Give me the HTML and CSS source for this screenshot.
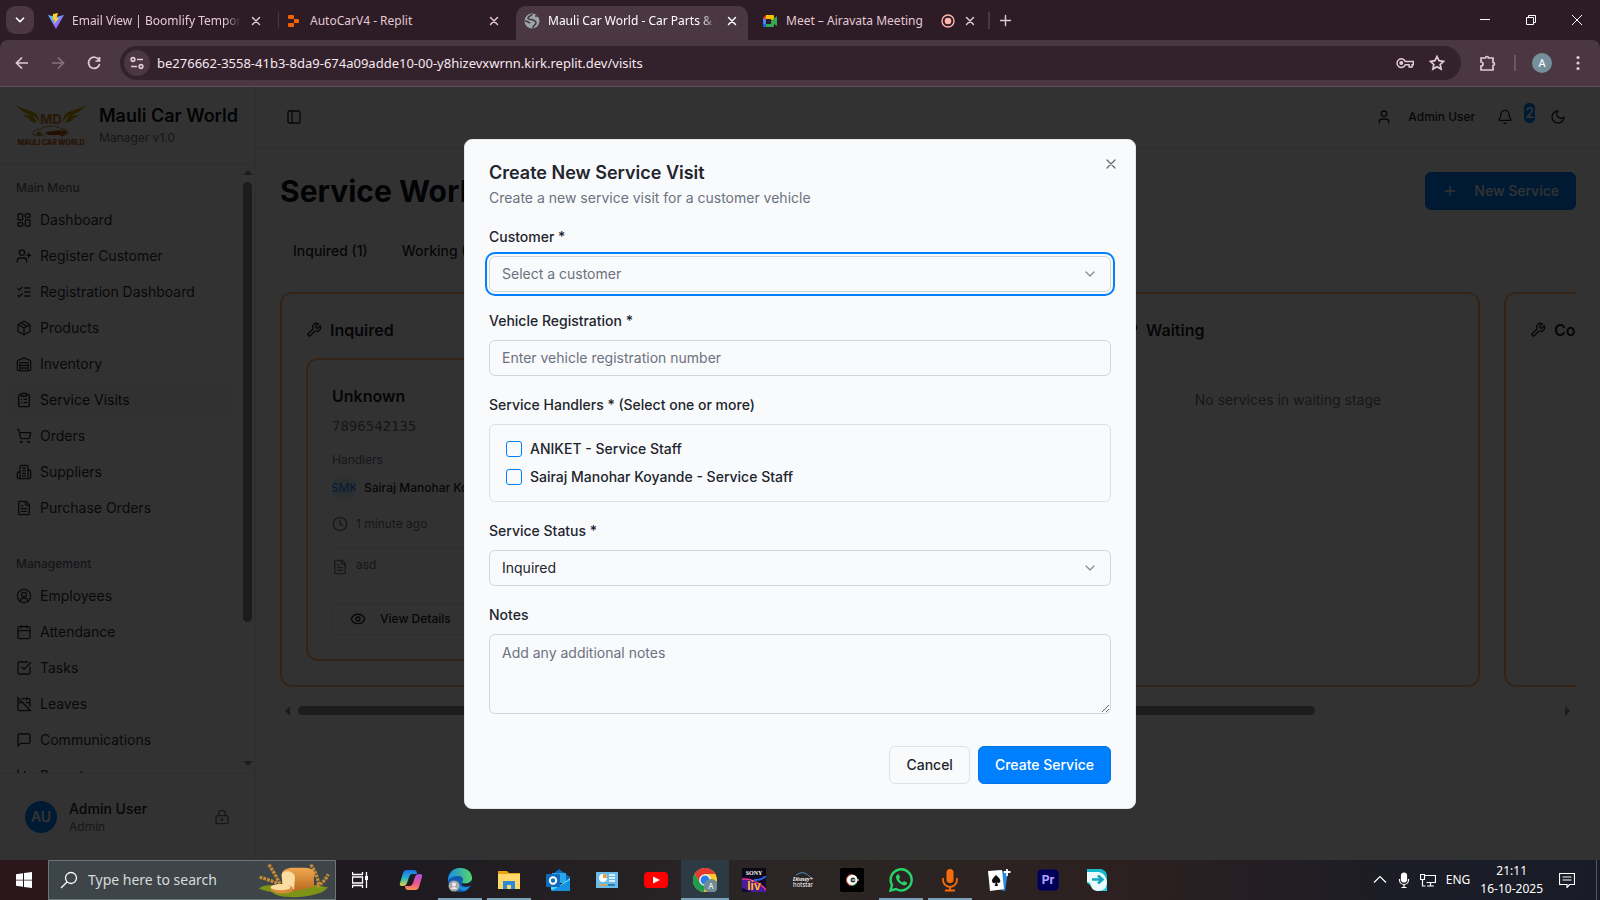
FILE: index.html
```
<!DOCTYPE html>
<html lang="en">
<head>
<meta charset="utf-8">
<title>Mauli Car World - Car Parts &amp; Service</title>
<link rel="stylesheet" href="styles.css">
</head>
<body>
<svg class="sprite" aria-hidden="true">
  <symbol id="x" viewBox="0 0 24 24"><path d="M18 6 6 18M6 6l12 12"/></symbol>
  <symbol id="chev" viewBox="0 0 24 24"><path d="m6 9 6 6 6-6"/></symbol>
  <symbol id="plus" viewBox="0 0 24 24"><path d="M5 12h14M12 5v14"/></symbol>
  <symbol id="panel" viewBox="0 0 24 24"><rect width="18" height="18" x="3" y="3" rx="2"/><path d="M9 3v18"/></symbol>
  <symbol id="user" viewBox="0 0 24 24"><path d="M19 21v-2a4 4 0 0 0-4-4H9a4 4 0 0 0-4 4v2"/><circle cx="12" cy="7" r="4"/></symbol>
  <symbol id="bell" viewBox="0 0 24 24"><path d="M10.3 21a2 2 0 0 0 3.4 0M3.3 15.3A1 1 0 0 0 4 17h16a1 1 0 0 0 .7-1.7C19.4 14 18 12.5 18 8A6 6 0 0 0 6 8c0 4.500-1.400 6-2.700 7.300"/></symbol>
  <symbol id="moon" viewBox="0 0 24 24"><path d="M12 3a6 6 0 0 0 9 9 9 9 0 1 1-9-9Z"/></symbol>
  <symbol id="dash" viewBox="0 0 24 24"><rect width="7" height="9" x="3" y="3" rx="1"/><rect width="7" height="5" x="14" y="3" rx="1"/><rect width="7" height="9" x="14" y="12" rx="1"/><rect width="7" height="5" x="3" y="16" rx="1"/></symbol>
  <symbol id="userplus" viewBox="0 0 24 24"><path d="M16 21v-2a4 4 0 0 0-4-4H6a4 4 0 0 0-4 4v2"/><circle cx="9" cy="7" r="4"/><path d="M19 8v6M22 11h-6"/></symbol>
  <symbol id="checks" viewBox="0 0 24 24"><path d="m3 17 2 2 4-4M3 7l2 2 4-4M13 6h8M13 12h8M13 18h8"/></symbol>
  <symbol id="box" viewBox="0 0 24 24"><path d="M11 21.700a2 2 0 0 0 2 0l7-4A2 2 0 0 0 21 16V8a2 2 0 0 0-1-1.700l-7-4a2 2 0 0 0-2 0l-7 4A2 2 0 0 0 3 8v8a2 2 0 0 0 1 1.700zM12 22V12M3.300 7 12 12l8.700-5M7.500 4.300l9 5.100"/></symbol>
  <symbol id="store" viewBox="0 0 24 24"><path d="M22 8.400V20a2 2 0 0 1-2 2H4a2 2 0 0 1-2-2V8.400a2 2 0 0 1 1.300-1.900l8-3.200a2 2 0 0 1 1.500 0l8 3.200A2 2 0 0 1 22 8.400ZM6 18h12M6 14h12"/><path d="M6 22V10h12v12"/></symbol>
  <symbol id="clip" viewBox="0 0 24 24"><rect width="8" height="4" x="8" y="2" rx="1"/><path d="M16 4h2a2 2 0 0 1 2 2v14a2 2 0 0 1-2 2H6a2 2 0 0 1-2-2V6a2 2 0 0 1 2-2h2M12 11h4M12 16h4M8 11h.01M8 16h.01"/></symbol>
  <symbol id="cart" viewBox="0 0 24 24"><circle cx="8" cy="21" r="1"/><circle cx="19" cy="21" r="1"/><path d="M2 2h2l2.700 12.400a2 2 0 0 0 2 1.600h9.800a2 2 0 0 0 1.900-1.600L22 7H5.100"/></symbol>
  <symbol id="build" viewBox="0 0 24 24"><path d="M6 22V4a2 2 0 0 1 2-2h8a2 2 0 0 1 2 2v18ZM6 12H4a2 2 0 0 0-2 2v6a2 2 0 0 0 2 2h2M18 9h2a2 2 0 0 1 2 2v9a2 2 0 0 1-2 2h-2M10 6h4M10 10h4M10 14h4M10 18h4"/></symbol>
  <symbol id="file" viewBox="0 0 24 24"><path d="M15 2H6a2 2 0 0 0-2 2v16a2 2 0 0 0 2 2h12a2 2 0 0 0 2-2V7ZM14 2v4a2 2 0 0 0 2 2h4M10 9H8M16 13H8M16 17H8"/></symbol>
  <symbol id="usercircle" viewBox="0 0 24 24"><circle cx="12" cy="12" r="10"/><circle cx="12" cy="10" r="3.500"/><path d="M6.500 20v-1.500a3 3 0 0 1 3-3h5a3 3 0 0 1 3 3V20"/></symbol>
  <symbol id="cal" viewBox="0 0 24 24"><path d="M8 2v4M16 2v4M3 10h18"/><rect width="18" height="18" x="3" y="4" rx="2"/></symbol>
  <symbol id="task" viewBox="0 0 24 24"><path d="M21 10.500V19a2 2 0 0 1-2 2H5a2 2 0 0 1-2-2V5a2 2 0 0 1 2-2h12.500M9 11l3 3L22 4"/></symbol>
  <symbol id="caloff" viewBox="0 0 24 24"><path d="M4.200 4.200A2 2 0 0 0 3 6v14a2 2 0 0 0 2 2h14a2 2 0 0 0 1.800-1.200M21 15.500V6a2 2 0 0 0-2-2H9.500M16 2v4M3 10h7M21 10h-5.500M2 2l20 20"/></symbol>
  <symbol id="msg" viewBox="0 0 24 24"><path d="M21 15a2 2 0 0 1-2 2H7l-4 4V5a2 2 0 0 1 2-2h14a2 2 0 0 1 2 2z"/></symbol>
  <symbol id="chart" viewBox="0 0 24 24"><path d="M3 3v16a2 2 0 0 0 2 2h16M8 17v-3M13 17V5M18 17V9"/></symbol>
  <symbol id="lock" viewBox="0 0 24 24"><circle cx="12" cy="16" r="1"/><rect x="3" y="10" width="18" height="12" rx="2"/><path d="M7 10V7a5 5 0 0 1 10 0v3"/></symbol>
  <symbol id="wrench" viewBox="0 0 24 24"><path d="M14.700 6.300a1 1 0 0 0 0 1.400l1.600 1.600a1 1 0 0 0 1.400 0l3.770-3.770a6 6 0 0 1-7.940 7.940l-6.910 6.910a2.120 2.120 0 0 1-3-3l6.910-6.910a6 6 0 0 1 7.940-7.940l-3.760 3.760z"/></symbol>
  <symbol id="clock" viewBox="0 0 24 24"><circle cx="12" cy="12" r="10"/><path d="M12 6v6l4 2"/></symbol>
  <symbol id="eye" viewBox="0 0 24 24"><path d="M2 12.300a1 1 0 0 1 0-.7 10.800 10.800 0 0 1 20 0 1 1 0 0 1 0 .7 10.800 10.800 0 0 1-20 0"/><circle cx="12" cy="12" r="3"/></symbol>
</svg>

<header class="browser">
  <div class="tabstrip">
    <button class="tab-search" aria-label="Search tabs"><svg class="ic"><use href="#chev"/></svg></button>
    <div class="tabs">
      <div class="tab">
        <svg class="fav" viewBox="0 0 16 16"><defs><linearGradient id="vg" x1="0" y1="0" x2="1" y2="1"><stop offset="0" stop-color="#41d1ff"/><stop offset="1" stop-color="#bd34fe"/></linearGradient></defs><path d="M0 2 8 16 16 2 8 4Z" fill="url(#vg)"/><path d="m10 0-5 1-.5 6L7 6.500 6 11l5-6H8.500Z" fill="#ffd028"/></svg>
        <span class="tab-title fade">Email View | Boomlify Temporary Mail</span>
        <button class="tab-x" aria-label="Close tab"><svg class="ic"><use href="#x"/></svg></button>
      </div>
      <div class="tab sep">
        <svg class="fav" viewBox="0 0 16 16" fill="#f26207"><path d="M3 2h4a1 1 0 0 1 1 1v3H3a1 1 0 0 1-1-1V3a1 1 0 0 1 1-1ZM8 6h4a1 1 0 0 1 1 1v2a1 1 0 0 1-1 1H8ZM3 10h5v3a1 1 0 0 1-1 1H3a1 1 0 0 1-1-1v-2a1 1 0 0 1 1-1Z"/></svg>
        <span class="tab-title">AutoCarV4 - Replit</span>
        <button class="tab-x" aria-label="Close tab"><svg class="ic"><use href="#x"/></svg></button>
      </div>
      <div class="tab active">
        <svg class="fav" viewBox="0 0 16 16"><circle cx="8" cy="8" r="7.500" fill="#9aa5ab"/><path d="M8 1c0 2-4 2-4 4s3 1 5 2 3 1 3 3-3 2-3 5M1 8c2 0 3 1 5 2M11 3h3" fill="none" stroke="#4a3742" stroke-width="1.600"/></svg>
        <span class="tab-title fade">Mauli Car World - Car Parts &amp; Service</span>
        <button class="tab-x" aria-label="Close tab"><svg class="ic"><use href="#x"/></svg></button>
      </div>
      <div class="tab">
        <svg class="fav" viewBox="0 0 16 16"><path d="M1 6V5l3-3v4Z" fill="#ea4335"/><path d="M4 2h7a1 1 0 0 1 1 1v4H9V6H4Z" fill="#fbbc04"/><path d="M1 6h3v5H1Z" fill="#4285f4"/><path d="M1 11h3v3H2a1 1 0 0 1-1-1Z" fill="#1967d2"/><path d="M4 11h5V8l6-5v10l-3-2v2a1 1 0 0 1-1 1H4Z" fill="#34a853"/></svg>
        <span class="tab-title">Meet – Airavata Meeting</span>
        <svg class="rec" viewBox="0 0 14 14"><circle cx="7" cy="7" r="6" fill="none" stroke="#ffb4ab" stroke-width="1.400"/><circle cx="7" cy="7" r="3.300" fill="#ffb4ab"/></svg>
        <button class="tab-x" aria-label="Close tab"><svg class="ic"><use href="#x"/></svg></button>
      </div>
    </div>
    <button class="new-tab" aria-label="New tab"><svg class="ic"><use href="#plus"/></svg></button>
    <div class="win">
      <button aria-label="Minimize"><svg viewBox="0 0 10 10"><path d="M0 4.500h10"/></svg></button>
      <button aria-label="Restore"><svg viewBox="0 0 10 10"><path d="M.5 2.500h7v7h-7zM2.500 2.500v-2h7v7h-2"/></svg></button>
      <button aria-label="Close"><svg viewBox="0 0 10 10"><path d="m0 0 10 10M10 0 0 10"/></svg></button>
    </div>
  </div>
  <div class="toolbar">
    <button class="tool" aria-label="Back"><svg class="gi" viewBox="0 0 16 16"><path d="M14 8H3M8 2.500 2.500 8 8 13.500"/></svg></button>
    <button class="tool off" aria-label="Forward"><svg class="gi" viewBox="0 0 16 16"><path d="M2 8h11M8 2.500 13.500 8 8 13.500"/></svg></button>
    <button class="tool" aria-label="Reload"><svg class="gi" viewBox="0 0 16 16"><path d="M13 5A5.600 5.600 0 1 0 13.600 9M13.500 2v4h-4"/></svg></button>
    <div class="omni">
      <button class="tune" aria-label="Site information"><svg class="gi" viewBox="0 0 16 16"><circle cx="4" cy="4.500" r="1.800"/><path d="M8 4.500h6M2 11.500h6"/><circle cx="12" cy="11.500" r="1.800"/></svg></button>
      <input class="url" type="text" aria-label="Address" value="be276662-3558-41b3-8da9-674a09adde10-00-y8hizevxwrnn.kirk.replit.dev/visits">
      <button aria-label="Passwords"><svg class="key" viewBox="0 0 18 12"><path d="M9.300 4.500h8v3.300h-1.200V10h-3V7.800H9.300A4.300 4.300 0 1 1 9.300 4.500Z"/><circle cx="5.300" cy="6" r="1.300" fill="#e3c9d5"/></svg></button>
      <button aria-label="Bookmark"><svg class="gi" viewBox="0 0 16 16"><path d="m8 1.500 2 4.200 4.600.6-3.400 3.200.9 4.600L8 11.800l-4.100 2.300.9-4.600L1.400 6.300 6 5.700Z"/></svg></button>
    </div>
    <button class="tool ext" aria-label="Extensions"><svg class="gi" viewBox="0 0 16 16"><path d="M1 3h4.500a1.500 1.500 0 0 1 3 0H13v4.500a1.500 1.500 0 0 1 0 3V15H1v-4a2 2 0 0 0 0-4Z"/></svg></button>
    <span class="bar"></span>
    <button class="profile" aria-label="Profile">A</button>
    <button class="tool kebab" aria-label="Menu"><svg viewBox="0 0 4 16"><circle cx="2" cy="2.500" r="1.600"/><circle cx="2" cy="8" r="1.600"/><circle cx="2" cy="13.500" r="1.600"/></svg></button>
  </div>
</header>

<div class="page">
  <aside class="sidebar">
    <div class="brand">
      <svg class="logo" viewBox="0 0 70 42"><g fill="#c99c00"><path d="M0 1c8 5 14 5 19 8 3 2 4 5 5 11-1-4-5-8-8-9 2 2 4 5 5 8-4-1-7-2-9-4 2 0 4 1 5 1-5-2-8-3-11-6 3 1 6 2 9 2C10 9 4 7 0 1Z"/><path d="M70 1c-8 5-14 5-19 8-3 2-4 5-5 11 1-4 5-8 8-9-2 2-4 5-5 8 4-1 7-2 9-4-2 0-4 1-5 1 5-2 8-3 11-6-3 1-6 2-9 2C60 9 66 7 70 1Z"/></g><text x="35" y="20" text-anchor="middle" class="logo-md">MD</text><path d="M17 29c1-3 5-4 8-4 5-4 15-4 20 0 4 0 7 1 7 5H30l-3 1H17Z" fill="none" stroke="#b08a20"/><path d="M29 28c8-1 15-2 22-1l-2 4H33Z" fill="#a84e0a"/><circle cx="23" cy="30" r="2.500" fill="#8c9a30"/><circle cx="46" cy="30" r="2.500" fill="#c06814"/><text x="35" y="41" text-anchor="middle" class="logo-name">MAULI CAR WORLD</text></svg>
      <div><div class="brand-name">Mauli Car World</div><div class="brand-sub">Manager v1.0</div></div>
    </div>
    <div class="side-scroll">
      <nav class="nav">
        <section class="group"><h2>Main Menu</h2>
          <a href="#"><svg class="ic"><use href="#dash"/></svg>Dashboard</a>
          <a href="#"><svg class="ic"><use href="#userplus"/></svg>Register Customer</a>
          <a href="#"><svg class="ic"><use href="#checks"/></svg>Registration Dashboard</a>
          <a href="#"><svg class="ic"><use href="#box"/></svg>Products</a>
          <a href="#"><svg class="ic"><use href="#store"/></svg>Inventory</a>
          <a href="#" class="current"><svg class="ic"><use href="#clip"/></svg>Service Visits</a>
          <a href="#"><svg class="ic"><use href="#cart"/></svg>Orders</a>
          <a href="#"><svg class="ic"><use href="#build"/></svg>Suppliers</a>
          <a href="#"><svg class="ic"><use href="#file"/></svg>Purchase Orders</a>
        </section>
        <section class="group"><h2>Management</h2>
          <a href="#"><svg class="ic"><use href="#usercircle"/></svg>Employees</a>
          <a href="#"><svg class="ic"><use href="#cal"/></svg>Attendance</a>
          <a href="#"><svg class="ic"><use href="#task"/></svg>Tasks</a>
          <a href="#"><svg class="ic"><use href="#caloff"/></svg>Leaves</a>
          <a href="#"><svg class="ic"><use href="#msg"/></svg>Communications</a>
          <a href="#"><svg class="ic"><use href="#chart"/></svg>Reports</a>
        </section>
      </nav>
      <div class="vbar"><i class="up"></i><span class="vtrack"><b></b></span><i class="down"></i></div>
    </div>
    <div class="account">
      <span class="avatar">AU</span>
      <div class="who"><div class="who-name">Admin User</div><div class="who-role">Admin</div></div>
      <button class="logout" aria-label="Log out"><svg class="ic"><use href="#lock"/></svg></button>
    </div>
  </aside>

  <main class="main">
    <div class="topbar">
      <button class="square" aria-label="Toggle sidebar"><svg class="ic"><use href="#panel"/></svg></button>
      <div class="top-actions">
        <button class="user-btn"><svg class="ic"><use href="#user"/></svg>Admin User</button>
        <button class="round" aria-label="Notifications"><svg class="ic"><use href="#bell"/></svg></button>
        <span class="badge">2</span>
        <button class="round" aria-label="Toggle theme"><svg class="ic"><use href="#moon"/></svg></button>
      </div>
    </div>
    <div class="content">
      <div class="title-row"><h1>Service Workflow</h1><button class="primary new"><svg class="ic"><use href="#plus"/></svg>New Service</button></div>
      <div class="stages"><button>Inquired (1)</button><button>Working (0)</button></div>
      <div class="board-wrap">
        <div class="board">
          <section class="col"><h3><svg class="ic"><use href="#wrench"/></svg>Inquired</h3>
            <article class="card">
              <h4>Unknown</h4>
              <p class="phone">7896542135</p>
              <p class="small muted">Handlers</p>
              <div class="handler"><span class="mini">SMK</span>Sairaj Manohar Koyande</div>
              <p class="time small muted"><svg class="ic"><use href="#clock"/></svg>1 minute ago</p>
              <p class="note small muted"><svg class="ic"><use href="#file"/></svg>asd</p>
              <button class="view"><svg class="ic"><use href="#eye"/></svg>View Details</button>
            </article>
          </section>
          <section class="col"><h3><svg class="ic"><use href="#wrench"/></svg>Working</h3><p class="empty">No services in working stage</p></section>
          <section class="col"><h3><svg class="ic"><use href="#wrench"/></svg>Waiting</h3><p class="empty">No services in waiting stage</p></section>
          <section class="col"><h3><svg class="ic"><use href="#wrench"/></svg>Completed</h3><p class="empty">No services in completed stage</p></section>
        </div>
        <div class="hbar"><i class="left"></i><span class="htrack"><b></b></span><i class="right"></i></div>
      </div>
    </div>
  </main>

  <div class="overlay">
    <form class="dialog" role="dialog" aria-labelledby="dlg-title">
      <button type="button" class="dlg-close" aria-label="Close"><svg class="ic"><use href="#x"/></svg></button>
      <div class="dlg-head"><h2 id="dlg-title">Create New Service Visit</h2><p>Create a new service visit for a customer vehicle</p></div>
      <div class="field"><label for="cust">Customer *</label><div class="sel focus"><select id="cust" class="ph"><option>Select a customer</option></select><svg class="ic"><use href="#chev"/></svg></div></div>
      <div class="field"><label for="reg">Vehicle Registration *</label><input id="reg" type="text" placeholder="Enter vehicle registration number"></div>
      <fieldset class="field"><legend>Service Handlers * (Select one or more)</legend>
        <div class="checks"><label><input type="checkbox">ANIKET - Service Staff</label><label><input type="checkbox">Sairaj Manohar Koyande - Service Staff</label></div>
      </fieldset>
      <div class="field"><label for="stat">Service Status *</label><div class="sel"><select id="stat"><option>Inquired</option></select><svg class="ic"><use href="#chev"/></svg></div></div>
      <div class="field"><label for="notes">Notes</label><textarea id="notes" placeholder="Add any additional notes"></textarea></div>
      <div class="dlg-foot"><button type="button" class="ghost">Cancel</button><button type="submit" class="primary">Create Service</button></div>
    </form>
  </div>
</div>

<footer class="taskbar">
  <button class="start" aria-label="Start"><svg viewBox="0 0 16 16"><path d="M0 2.300 7 1.300v6.400H0ZM8 1.100 16 0v7.700H8ZM0 8.500h7v6.300l-7-1ZM8 8.500h8V16l-8-1.100Z" fill="#fff"/></svg></button>
  <label class="search">
    <svg class="mag" viewBox="0 0 18 18"><circle cx="11" cy="7" r="5.500"/><path d="m7 11-6 6"/></svg>
    <input type="text" placeholder="Type here to search" aria-label="Search">
    <svg class="bread" viewBox="0 0 76 40"><defs><linearGradient id="br" x1="0" y1="0" x2="0" y2="1"><stop offset="0" stop-color="#f0a850"/><stop offset="1" stop-color="#b96a1e"/></linearGradient></defs><path d="M1 29c6-5 14-3 20-4 20-3 38-1 53 3-3 2-5 5-10 6-15 5-38 6-48 0 3-1-7-2-9-3Z" fill="#7d9418"/><g stroke="#c48a34" stroke-width="3.500" stroke-dasharray="3 1" fill="none"><path d="M23 24C20 17 15 9 11 3M20 23C14 21 7 18 1 17M64 25c-1-8-4-15-9-22M62 27c5-3 9-7 12-13"/></g><path d="M25 15c0-6 6-8 12-8h12c9 0 13 5 10 11v9l-22 5-11-5Z" fill="url(#br)"/><path d="M25 15c0-6 13-6 14 2l-1 13-12-4Z" fill="#fbdda4"/><path d="M13 28c3-4 20-4 24 0l-1 4c-6 3-17 3-22-1Z" fill="#d88a3a"/><ellipse cx="24" cy="27.500" rx="10.500" ry="3.200" fill="#fbdda4"/></svg>
  </label>
  <button class="tview" aria-label="Task View"><svg viewBox="0 0 16 16"><path d="M.5 0v2.500h10V0M.5 5h10v6H.5zM.5 16v-2.500h10V16M14.500 0v16"/><path d="M13 4h3v4h-3z" fill="#fff" stroke="none"/></svg></button>
  <div class="apps">
    <button aria-label="Copilot"><svg viewBox="0 0 24 24"><defs><linearGradient id="c1" x1="0" y1="0" x2="0" y2="1"><stop stop-color="#1d6fe8"/><stop offset=".5" stop-color="#23b5c8"/><stop offset="1" stop-color="#e8d33b"/></linearGradient><linearGradient id="c2" x1="0" y1="0" x2="0" y2="1"><stop stop-color="#a64fe8"/><stop offset=".6" stop-color="#f0568f"/><stop offset="1" stop-color="#f9914c"/></linearGradient></defs><path d="M7 2h8q3 0 3 4h-5q-2 0-3 3l-2 6q-1 3-4 3H3q-3 0-2-3L4 5q1-3 3-3Z" fill="url(#c1)"/><path d="M17 22H9q-3 0-3-4h5q2 0 3-3l2-6q1-3 4-3h1q3 0 2 3l-3 10q-1 3-3 3Z" fill="url(#c2)"/></svg></button>
    <button class="run" aria-label="Edge"><svg viewBox="0 0 24 24"><defs><linearGradient id="eg"><stop stop-color="#168de2"/><stop offset="1" stop-color="#59d66a"/></linearGradient></defs><circle cx="12" cy="12" r="12" fill="#0f5cae"/><path d="M0 13C0-5 24-3 24 10c0 5-6 7-10 5 2-3 1-7-3-7-6 0-10 2-11 5Z" fill="url(#eg)"/><path d="M10 12c0 7 6 9 12 6-1 2-3 4-5 5-7-1-9-6-7-11Z" fill="#1b8fe0"/><path d="M24 12q-4 5-10 3v2q5 3 9 0Z" fill="#221c1e"/><circle cx="6" cy="18" r="5.500" fill="#aaa"/><circle cx="6" cy="16.500" r="2" fill="#eee"/><path d="M2.500 21q3.500-4 7 0" fill="#eee"/></svg></button>
    <button class="run" aria-label="File Explorer"><svg viewBox="0 0 24 24"><path d="M1 3h9l2 2h11v5H1Z" fill="#e8a317"/><path d="M1 6h22v15H1Z" fill="#ffd86b"/><path d="M6 21v-8h12v8h-4v-4h-4v4Z" fill="#2c8ad6"/></svg></button>
    <button aria-label="Outlook"><svg viewBox="0 0 24 24"><path d="M3 9 13 1l11 8v3H3Z" fill="#1066b8"/><path d="M6 5h14v10H6Z" fill="#28a8ea"/><path d="M5 13l9 4 10-7v11q0 2-2 2H7q-2 0-2-2Z" fill="#50d9ff"/><path d="M5 23 24 12v9q0 2-2 2Z" fill="#1490df"/><rect y="6" width="14" height="13" rx="1" fill="#0f6cbd"/><circle cx="7" cy="12.500" r="3.200" fill="none" stroke="#fff" stroke-width="2"/></svg></button>
    <button aria-label="System information"><svg viewBox="0 0 24 24"><rect x="1" y="4" width="22" height="16" fill="#69bbe8"/><circle cx="8" cy="10" r="4" fill="#fff"/><path d="M8 10V6a4 4 0 0 1 4 4Z" fill="#f0a030"/><path d="M14 7h6M14 10h6M14 13h6" stroke="#fff" stroke-width="1.500"/><path d="M4 17h8" stroke="#f0a030" stroke-width="1.500"/><path d="M13 17h7" stroke="#1668a8" stroke-width="1.500"/></svg></button>
    <button aria-label="YouTube"><svg viewBox="0 0 24 24"><rect y="4" width="24" height="16" rx="4" fill="#f00"/><path d="m9 8.500 7 3.500-7 3.500Z" fill="#fff"/></svg></button>
    <button class="run on" aria-label="Chrome"><svg viewBox="0 0 24 24"><circle cx="12" cy="12" r="12" fill="#fcc934"/><path d="M1.600 6A12 12 0 0 1 22.400 6H12l-5 9Z" fill="#e33b2e"/><path d="M1.600 6 7 15l5 3-1 6A12 12 0 0 1 1.600 6Z" fill="#1e9e4a"/><circle cx="12" cy="12" r="5.800" fill="#fff"/><circle cx="12" cy="12" r="4.500" fill="#2a7de9"/><circle cx="18" cy="18" r="7" fill="#6f8b97"/><text x="18" y="21" text-anchor="middle" class="app-a">A</text></svg></button>
    <button aria-label="Sony LIV"><svg viewBox="0 0 24 24"><rect width="24" height="24" fill="#120a2c"/><path d="M0 20V11q10-1 24 11v2H10Z" fill="#4a1aa0"/><path d="M0 11q14-1 24 11" stroke="#e8368a" stroke-width="1.500" fill="none"/><path d="M12 12q8 0 12-4" stroke="#2a6be8" stroke-width="2" fill="none"/><rect width="24" height="8" fill="#0a0814"/><text x="12" y="7" text-anchor="middle" class="sony">SONY</text><text x="12" y="22" text-anchor="middle" class="liv">liv</text></svg></button>
    <button aria-label="Disney+ Hotstar"><svg viewBox="0 0 24 24"><path d="M5 7q8-6 15 3" fill="none" stroke="#4a90b8"/><text x="12" y="13" text-anchor="middle" class="dis">Disney+</text><text x="12" y="19" text-anchor="middle" class="hot">hotstar</text></svg></button>
    <button aria-label="ZEE5"><svg viewBox="0 0 24 24"><rect width="24" height="24" rx="2" fill="#000"/><circle cx="12" cy="12" r="5.500" fill="#fff"/><path d="M12 6.500a5.500 5.500 0 0 0 0 11" fill="none" stroke="#d8483a"/><path d="M12 17.500a5.500 5.500 0 0 0 4-2" fill="none" stroke="#2a9a50"/><circle cx="13" cy="12" r="2.500" fill="#333"/><path d="M12 12h7" stroke="#fff"/></svg></button>
    <button class="run" aria-label="WhatsApp"><svg viewBox="0 0 24 24"><path d="M1.500 22.500 3 17A10.500 10.500 0 1 1 7 21Z" fill="none" stroke="#25d366" stroke-width="2.400"/><path d="M8.500 6.500c-3 2-1 6 2 8.500s6 3.500 7.500 1v-1.500l-3-1.500-1.500 1.500q-2.500-1-3.500-3.500L11 9.500l-1-3Z" fill="#25d366"/></svg></button>
    <button class="run" aria-label="Voice Recorder"><svg viewBox="0 0 24 24"><rect x="8.500" y="1" width="7" height="14" rx="3.500" fill="#f76b0b"/><path d="M5 10v2a7 7 0 0 0 14 0v-2M12 19v3M7 22.500h10" fill="none" stroke="#f76b0b" stroke-width="1.800"/></svg></button>
    <button aria-label="Solitaire"><svg viewBox="0 0 24 24"><path d="m10 2 11 2-3 19-9-2Z" fill="#2a8be0"/><path d="m1 3 14-1 2 19-14 2Z" fill="#fff"/><path d="M9 7q7 6 3 8-2 0-2-1l1 4H7.500L9 14q-1 2-3 1-3-3 3-8Z" fill="#111"/><path d="M20 1v7M17 4h6.500" stroke="#fff" stroke-width="1.800"/></svg></button>
    <button aria-label="Premiere Pro"><svg viewBox="0 0 24 24"><rect x="1.500" y="1.500" width="21" height="21" rx="4" fill="#00005b"/><text x="12" y="16" text-anchor="middle" class="pr">Pr</text></svg></button>
    <button aria-label="Filmora"><svg viewBox="0 0 24 24"><path d="M2 1h14q6 1 6 8v14h-9L2 15Z" fill="#17b8cc"/><path d="M2 4h12q8 2 8 12v7H12q-6-1-7-8l-3-1Z" fill="#e9fbff"/><path d="M7 11.500h10M13 7.500l4.500 4-4.500 4" fill="none" stroke="#12a5bd" stroke-width="2.600"/><path d="M13 23q8 0 9-8v8Z" fill="#20d0e8"/></svg></button>
  </div>
  <div class="tray">
    <svg viewBox="0 0 16 16"><path d="m2 10.500 6-6 6 6"/></svg>
    <svg viewBox="0 0 16 16"><rect x="5.500" y="1" width="5" height="9" rx="2.500" fill="#fff"/><path d="M3.500 7v1a4.500 4.500 0 0 0 9 0V7M8 12.500v3M5.500 15.500h5"/></svg>
    <svg viewBox="0 0 16 16"><path d="M4.500 3.500h11v7h-9M10.500 10.500v3M7 14h7M.5 2.500h4v5h-4zM2.500 7.500V14h3"/></svg>
    <span class="lang">ENG</span>
    <div class="clock"><span>21:11</span><span>16-10-2025</span></div>
    <svg class="notif" viewBox="0 0 16 16"><path d="M.5 1.500h15v11h-5l-2.500 3v-3H.500ZM3.500 5h9M3.500 8h9"/></svg>
  </div>
</footer>
</body>
</html>
```
FILE: styles.css
```
* { box-sizing: border-box; }
body { margin: 0; height: 100vh; display: flex; flex-direction: column; overflow: hidden; font: 14px/20px Inter, sans-serif; color: #1b1f27; }
h1, h2, h3, h4, p { margin: 0; }
button { font: inherit; color: inherit; background: none; border: 0; padding: 0; display: flex; align-items: center; justify-content: center; }
svg { display: block; flex: none; }
a { color: inherit; text-decoration: none; }
.sprite { position: absolute; width: 0; height: 0; }
.ic { width: 16px; height: 16px; fill: none; stroke: currentColor; stroke-width: 2; stroke-linecap: round; stroke-linejoin: round; }

/* Browser window */
.browser { font-family: "Noto Sans", sans-serif; color: #e3c9d5; background: #2d1b25; }
.tabstrip { height: 40px; display: flex; align-items: center; padding-left: 6px; }
.tab-search { width: 28px; height: 28px; border-radius: 9px; background: #4a3742; color: #fff; }
.tab-search .ic { stroke-width: 3; width: 14px; }
.tabs { display: flex; align-self: stretch; gap: 6px; padding: 6px 0 0 6px; }
.tab { width: 232px; display: flex; align-items: center; gap: 8px; padding: 0 9px 5px 8px; font-size: 12px; line-height: 18px; }
.tab.sep { background: linear-gradient(#4a3742, #4a3742) 0 6px / 1px 16px no-repeat; }
.tab.active { background: #4a3742; border-radius: 10px 10px 0 0; color: #fff; }
.fav { width: 16px; height: 16px; }
.tab-title { flex: 1; white-space: nowrap; overflow: hidden; }
.fade { -webkit-mask-image: linear-gradient(90deg, #000 90%, transparent); mask-image: linear-gradient(90deg, #000 90%, transparent); }
.tab-x { width: 14px; }
.tab-x .ic { width: 14px; height: 14px; stroke-width: 2.500; }
.rec { width: 14px; height: 14px; }
.new-tab { border-left: 2px solid #4a3742; margin-left: 2px; padding-left: 7px; }
.new-tab .ic { width: 17px; height: 17px; }
.win { margin-left: auto; display: flex; align-self: stretch; }
.win button { width: 46px; }
.win svg { width: 10px; height: 10px; fill: none; stroke: #fff; overflow: visible; }
.toolbar { height: 47px; background: #4a3742; border-bottom: 1px solid #604b56; border-radius: 8px 8px 0 0; display: flex; align-items: center; padding: 0 12px; }
.gi { width: 16px; height: 16px; fill: none; stroke: #e3c9d5; stroke-width: 1.700; }
.tool { width: 20px; height: 28px; margin-right: 16px; }
.off { opacity: .4; }
.omni { flex: 1; height: 34px; border-radius: 17px; background: #33212c; display: flex; align-items: center; gap: 15px; padding: 0 16px 0 4px; }
.tune { width: 26px; height: 26px; border-radius: 13px; background: #4a3742; }
.url { flex: 1; font: 13px/20px "Noto Sans", sans-serif; color: #f7e8ef; background: none; border: 0; outline: 0; padding: 0; margin-left: -8px; }
.key { width: 18px; height: 12px; fill: none; stroke: #e3c9d5; stroke-width: 1.500; }
.ext { margin: 0 16px 0 17px; }
.bar { width: 2px; height: 16px; background: #6a5561; margin-right: 16px; }
.profile { width: 20px; height: 20px; border-radius: 10px; background: #75909c; color: #fff; font-size: 11px; line-height: 20px; }
.kebab { margin: 0 0 0 16px; }
.kebab svg { width: 4px; height: 16px; fill: #e3c9d5; }

/* Application */
.page { flex: 1; min-height: 0; display: flex; position: relative; background: #fbfbfc; overflow: hidden; }
.sidebar { width: 256px; flex: none; border-right: 1px solid #e2e4e8; display: flex; flex-direction: column; }
.brand { height: 77px; flex: none; border-bottom: 1px solid #e2e4e8; display: flex; align-items: center; gap: 13px; padding: 0 16px; }
.logo { width: 70px; height: 42px; }
.logo-md { font: 700 13px Inter, sans-serif; fill: #c47a20; }
.logo-name { font: 800 7px Inter, sans-serif; fill: #c46210; }
.brand-name { font-size: 18px; font-weight: 600; line-height: 24px; color: #0e1118; white-space: nowrap; }
.brand-sub { font-size: 12px; line-height: 16px; color: #6b7280; margin-top: 2px; }
.side-scroll { flex: 1; min-height: 0; display: flex; }
.nav { flex: 1; overflow: hidden; display: flex; flex-direction: column; gap: 8px; }
.group { padding: 8px; display: flex; flex-direction: column; gap: 4px; }
.group h2 { font-size: 12px; font-weight: 500; line-height: 32px; color: #666b75; padding: 0 8px; margin-bottom: -4px; }
.group a { height: 32px; flex: none; display: flex; align-items: center; gap: 8px; padding: 0 8px; border-radius: 6px; color: #2c3038; }
.group a.current { background: #f3f4f5; color: #1b1f27; }
.vbar { width: 15px; display: flex; flex-direction: column; align-items: center; padding: 6px 0 7px; }
.vtrack { flex: 1; width: 9px; padding: 7px 0; }
.vtrack b { display: block; height: 77%; border-radius: 5px; background: #8b8b8b; }
.up, .down, .left, .right { border: 5px solid transparent; }
.up { border-top: 0; border-bottom-color: #8b8b8b; }
.down { border-bottom: 0; border-top-color: #8b8b8b; }
.left { border-left: 0; border-right-color: #8b8b8b; }
.right { border-right: 0; border-left-color: #8b8b8b; }
.account { height: 87px; flex: none; border-top: 1px solid #e2e4e8; display: flex; align-items: center; gap: 12px; padding: 0 25px; }
.avatar { width: 32px; height: 32px; border-radius: 16px; background: #0080ff; color: #fff; font-weight: 600; line-height: 32px; text-align: center; }
.who { flex: 1; }
.who-name { font-weight: 500; }
.who-role { font-size: 12px; line-height: 16px; color: #6b7280; }
.logout { color: #6b7280; }

.main { flex: 1; min-width: 0; }
.topbar { height: 61px; border-bottom: 1px solid #e2e4e8; display: flex; align-items: center; justify-content: space-between; padding: 0 24px; }
.top-actions { display: flex; align-items: center; }
.square { width: 28px; height: 28px; }
.round { width: 36px; height: 36px; }
.user-btn { gap: 16px; padding: 0 12px; font-size: 12px; font-weight: 500; }
.badge { align-self: flex-start; background: #0080ff; color: #fff; border-radius: 5px; font-size: 14px; line-height: 20px; font-weight: 600; padding: 0 1px; margin: 4px 5px 0 1px; }
.content { padding: 24px; display: flex; flex-direction: column; gap: 24px; }
.title-row { display: flex; justify-content: space-between; align-items: center; }
h1 { font-size: 30px; line-height: 38px; font-weight: 700; color: #0e1118; }
.primary { height: 38px; padding: 0 16px; border-radius: 6px; border: 1px solid #0073e6; background: #0080ff; color: #fff; font-weight: 500; }
.new { gap: 16px; }
.stages { display: flex; gap: 8px; }
.stages button { height: 34px; border: 1px solid #edeef1; border-radius: 6px; padding: 0 12px; font-weight: 500; }
.board-wrap { overflow: hidden; }
.board { display: flex; gap: 24px; padding-bottom: 16px; }
.col { width: 384px; flex: none; border: 2px solid #fdb475; border-radius: 12px; padding: 24px; }
.col h3 { display: flex; align-items: center; gap: 8px; font-size: 16px; line-height: 24px; font-weight: 600; margin-bottom: 16px; }
.empty { text-align: center; color: #6b7280; padding: 32px 0; }
.card { border: 2px solid #fdb475; border-radius: 12px; padding: 24px; }
.card h4 { font-size: 16px; line-height: 24px; font-weight: 600; margin-bottom: 8px; }
.phone { font-family: "DejaVu Sans Mono", monospace; color: #6b7280; margin-bottom: 16px; }
.small { font-size: 12px; line-height: 16px; }
.muted { color: #6b7280; }
.handler { display: flex; align-items: center; gap: 8px; margin: 8px 0 16px; font-size: 12px; line-height: 24px; font-weight: 500; }
.mini { width: 24px; height: 24px; border-radius: 12px; background: #d9e9fb; color: #0080ff; font-weight: 400; display: flex; justify-content: center; overflow: hidden; }
.time, .note { display: flex; gap: 8px; }
.note { border-top: 1px solid #d8dade; margin: 16px 0 28px; padding-top: 8px; }
.note .ic { margin-top: 2px; }
.view { width: 100%; height: 32px; justify-content: flex-start; gap: 14px; padding: 0 17px; border: 1px solid #e2e4e8; border-radius: 6px; font-size: 12px; font-weight: 500; }
.hbar { height: 15px; display: flex; align-items: center; padding: 0 6px 0 5px; }
.htrack { flex: 1; padding: 0 11px 0 8px; }
.htrack b { display: block; width: 81%; height: 9px; border-radius: 5px; background: #8b8b8b; }

/* Dialog */
.overlay { position: absolute; inset: 0; background: rgba(0, 0, 0, .8); display: flex; align-items: center; justify-content: center; }
.dialog { position: relative; width: 672px; max-width: 100%; background: #f9fafc; border: 1px solid #e4e6ea; border-radius: 8px; padding: 24px; display: flex; flex-direction: column; gap: 22px; color: #22252d; }
.dlg-close { position: absolute; top: 16px; right: 16px; color: #6a6d73; }
.dlg-head { display: flex; flex-direction: column; gap: 6px; }
.dlg-head h2 { font-size: 18px; line-height: 18px; font-weight: 600; }
.dlg-head p { color: #6b7280; }
.field { display: flex; flex-direction: column; gap: 12px; border: 0; margin: 0; padding: 0; min-width: 0; }
.field > label, legend { font-weight: 500; line-height: 14px; padding: 0; }
legend { margin-bottom: 12px; }
.field select, .field input[type=text], textarea { width: 100%; height: 36px; display: block; border: 1px solid #d3d6db; border-radius: 6px; padding: 0 12px; margin: 0; background: transparent; font: inherit; color: #22252d; outline: 0; }
.field select { appearance: none; }
.field select.ph { color: #6b7280; }
.field ::placeholder { color: #6b7280; opacity: 1; }
.sel { display: flex; align-items: center; border-radius: 6px; }
.sel .ic { margin-left: -29px; margin-right: 13px; opacity: .5; }
.focus { outline: 2px solid #0080ff; outline-offset: 2px; }
.field textarea { height: 80px; padding: 8px 12px; resize: vertical; }
.checks { border: 1px solid #dcdfe4; border-radius: 6px; padding: 16px; display: flex; flex-direction: column; gap: 12px; }
.checks label { display: flex; align-items: center; gap: 8px; line-height: 16px; font-weight: 500; }
.checks input { appearance: none; width: 16px; height: 16px; margin: 0; border: 1px solid #0080ff; border-radius: 3px; }
.dlg-foot { display: flex; justify-content: flex-end; gap: 8px; margin-top: 10px; }
.ghost { height: 38px; padding: 0 16px; border: 1px solid #dfe2e6; border-radius: 6px; font-weight: 500; }

/* Taskbar */
.taskbar { height: 40px; flex: none; display: flex; color: #fff; font-family: "Noto Sans", sans-serif; background: linear-gradient(90deg, #2b171b, #1d1a20 25%, #2b2625 48%, #2c2020 70%, #1b1c26 88%, #191c28); }
.start { width: 48px; }
.start svg, .tview svg { width: 16px; height: 16px; }
.search { width: 288px; border: 1px solid #6c7578; background: #3d4548; display: flex; align-items: center; padding: 0 3px 0 11px; gap: 10px; }
.mag { width: 18px; height: 18px; fill: none; stroke: #fff; stroke-width: 1.300; }
.search input { flex: 1; min-width: 0; border: 0; background: none; outline: 0; padding: 0; font: 14px/20px "Noto Sans", sans-serif; }
.search ::placeholder { color: #d8dbdc; opacity: 1; }
.bread { width: 76px; height: 38px; }
.tview { width: 48px; margin-right: 3px; }
.tview svg { fill: none; stroke: #fff; stroke-width: 1.300; }
.apps { display: flex; gap: 1px; }
.apps button { width: 48px; border-bottom: 2px solid transparent; padding-top: 2px; }
.apps svg { width: 24px; height: 24px; }
.apps .run { border-image: linear-gradient(90deg, transparent 4px, #7ba0ba 4px, #7ba0ba 44px, transparent 44px) 2; border-width: 0 0 2px; border-style: solid; }
.apps .on { background: #2c3a44; border-image: none; border-color: #7ba0ba; }
.app-a { font: 8px Inter, sans-serif; fill: #fff; }
.sony { font: 700 6px "Liberation Serif", serif; fill: #fff; }
.liv { font: 700 12px Inter, sans-serif; fill: #ffb81c; }
.dis { font: italic 700 6px "Liberation Serif", serif; fill: #fff; }
.hot { font: 6px Inter, sans-serif; fill: #fff; }
.pr { font: 700 12px Inter, sans-serif; fill: #b3a6ff; }
.tray { margin-left: auto; display: flex; align-items: center; gap: 8px; padding-right: 3px; font-size: 12px; line-height: 18px; border-right: 1px solid #55565e; margin-right: 3px; }
.tray svg { width: 16px; height: 16px; fill: none; stroke: #fff; stroke-width: 1.200; }
.tray .notif { margin: 0 18px 0 8px; }
.lang { margin-left: 2px; }
.clock { display: flex; flex-direction: column; align-items: center; padding-left: 2px; }
```
